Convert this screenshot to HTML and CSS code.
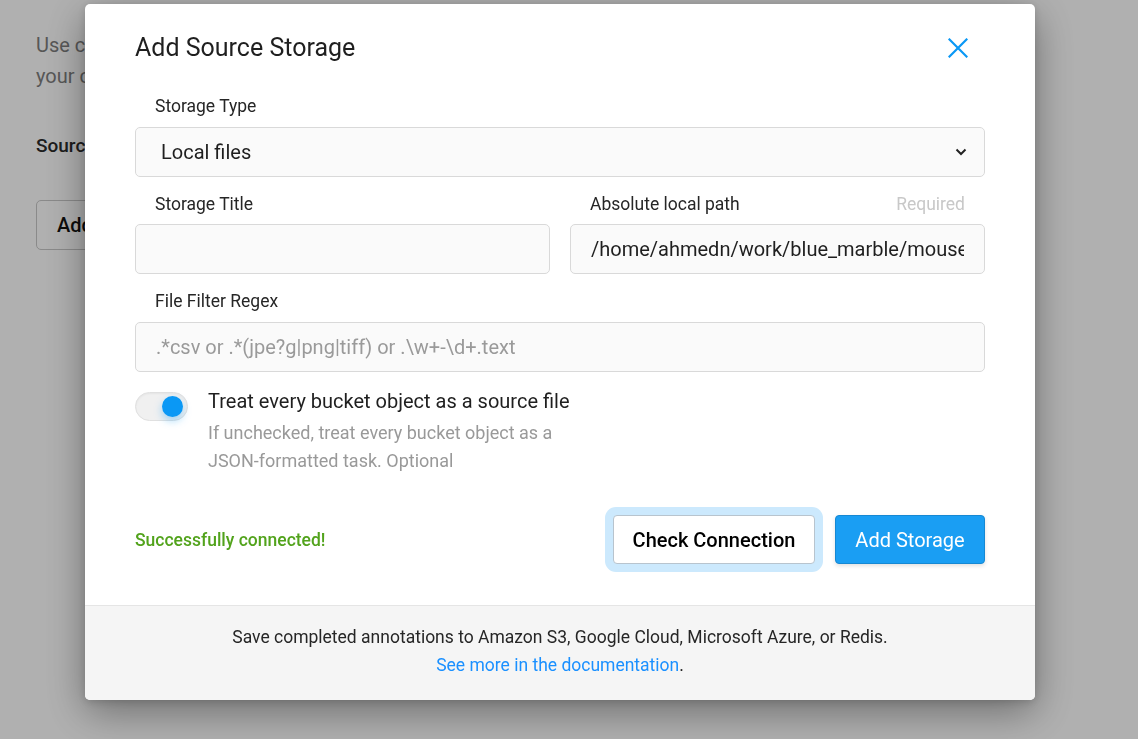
FILE: index.html
```html
<!DOCTYPE html>
<html lang="en">
<head>
<meta charset="utf-8">
<title>Add Source Storage</title>
<link rel="stylesheet" href="styles.css">
</head>
<body>
<div class="page">
  <p class="intro">Use cloud or database storage as the source for your labeling tasks or the target of<br>your completed annotations.</p>
  <h3 class="section-title">Source Cloud Storage</h3>
  <button class="page-btn">Add Source Storage</button>
</div>

<div class="overlay">
  <div class="modal">
    <div class="modal-body">
      <div class="modal-header">
        <h2 class="modal-title">Add Source Storage</h2>
        <button class="close-btn" aria-label="Close">
          <svg width="20" height="20" viewBox="0 0 20 20"><path d="M1.5 1.5 L18.5 18.5 M18.5 1.5 L1.5 18.5" stroke="#0a98f5" stroke-width="2.2" fill="none" stroke-linecap="square"/></svg>
        </button>
      </div>

      <div class="field">
        <div class="label-row"><span class="label">Storage Type</span></div>
        <div class="select-wrap">
          <div class="select">Local files</div>
          <svg class="chevron" width="12" height="8" viewBox="0 0 12 8"><path d="M1.5 1.5 L6 6 L10.5 1.5" stroke="#222" stroke-width="2" fill="none"/></svg>
        </div>
      </div>

      <div class="field-row">
        <div class="field">
          <div class="label-row"><span class="label">Storage Title</span></div>
          <div class="input"></div>
        </div>
        <div class="field">
          <div class="label-row"><span class="label">Absolute local path</span><span class="required">Required</span></div>
          <div class="input"><span class="input-text">/home/ahmedn/work/blue_marble/mouse_images</span></div>
        </div>
      </div>

      <div class="field">
        <div class="label-row"><span class="label">File Filter Regex</span></div>
        <div class="input placeholder"><span class="input-text">.*csv or .*(jpe?g|png|tiff) or .\w+-\d+.text</span></div>
      </div>

      <div class="toggle-row">
        <div class="toggle"><span class="thumb"></span></div>
        <div class="toggle-text">
          <div class="toggle-title">Treat every bucket object as a source file</div>
          <div class="toggle-desc">If unchecked, treat every bucket object as a JSON-formatted task. Optional</div>
        </div>
      </div>

      <div class="actions">
        <span class="success">Successfully connected!</span>
        <div class="buttons">
          <button class="btn btn-default">Check Connection</button>
          <button class="btn btn-primary">Add Storage</button>
        </div>
      </div>
    </div>
    <div class="modal-footer">
      Save completed annotations to Amazon S3, Google Cloud, Microsoft Azure, or Redis.<br>
      <a class="doc-link" href="#">See more in the documentation</a>.
    </div>
  </div>
</div>
</body>
</html>
```

FILE: styles.css
```css
* { box-sizing: border-box; }
html, body { margin: 0; padding: 0; }
body {
  font-family: Roboto, "Noto Sans", "Liberation Sans", sans-serif;
  background: #ffffff;
  color: #222;
  width: 1138px;
  height: 739px;
  overflow: hidden;
}

.page { padding: 30px 36px; }
.intro {
  margin: 0;
  font-size: 20px;
  line-height: 31px;
  color: #7e7e7e;
  white-space: nowrap;
}
.section-title {
  margin: 42px 0 0;
  font-size: 19px;
  font-weight: 500;
  line-height: 24px;
  color: #2a2a2a;
}
.page-btn {
  margin-top: 42px;
  height: 50px;
  padding: 0 20px;
  font-family: inherit;
  font-size: 20px;
  font-weight: 500;
  color: #111;
  background: #fff;
  border: 1px solid #c8c8c8;
  border-radius: 5px;
}

.overlay {
  position: fixed;
  inset: 0;
  background: rgba(0, 0, 0, 0.31);
}
.modal {
  position: absolute;
  left: 85px;
  top: 4px;
  width: 950px;
  background: #fff;
  border-radius: 5px;
  overflow: hidden;
  box-shadow: 0 12px 40px rgba(0, 0, 0, 0.38), 0 2px 8px rgba(0, 0, 0, 0.15);
}
.modal-body { padding: 30px 50px 41px; }

.modal-header {
  display: flex;
  justify-content: space-between;
  align-items: center;
  margin-bottom: 33px;
}
.modal-title {
  margin: 0;
  font-size: 25px;
  font-weight: 400;
  line-height: 28px;
  color: #1f1f1f;
}
.close-btn {
  width: 20px;
  height: 20px;
  padding: 0;
  margin-right: 17px;
  border: 0;
  background: none;
  display: flex;
}

.field { display: flex; flex-direction: column; margin-bottom: 16px; min-width: 0; }
.field-row { display: grid; grid-template-columns: 1fr 1fr; gap: 20px; }
.field-row .label-row { margin-bottom: 9px; }
.label-row {
  display: flex;
  justify-content: space-between;
  padding: 0 20px;
  margin-bottom: 10px;
  line-height: 22px;
}
.label { font-size: 17.5px; color: #262626; }
.required { font-size: 17.5px; color: #c8c8c8; }

.select-wrap { position: relative; }
.select, .input {
  height: 50px;
  border: 1px solid #d9d9d9;
  border-radius: 5px;
  background: #fafafa;
  display: flex;
  align-items: center;
  font-size: 20px;
  color: #1f1f1f;
  overflow: hidden;
  white-space: nowrap;
}
.select { padding-left: 25px; }
.input { padding: 0 20px; }
.input-text { flex: 1; min-width: 0; overflow: hidden; }
.input.placeholder { color: #9a9a9a; }
.chevron { position: absolute; right: 18px; top: 21px; }

.toggle-row {
  display: flex;
  gap: 20px;
  padding-top: 1px;
}
.toggle {
  position: relative;
  flex: none;
  width: 53px;
  height: 29px;
  margin-top: 3px;
  border-radius: 15px;
  background: #f0f0f0;
  border: 1px solid #e0e0e0;
  box-shadow: inset 0 1px 2px rgba(0,0,0,0.05);
}
.thumb {
  position: absolute;
  right: 4px;
  top: 3px;
  width: 21px;
  height: 21px;
  border-radius: 50%;
  background: #0a98f5;
  box-shadow: 0 4px 8px rgba(10, 152, 245, 0.35);
}
.toggle-title {
  font-size: 20px;
  line-height: 24px;
  color: #1f1f1f;
}
.toggle-desc {
  margin-top: 6px;
  max-width: 360px;
  font-size: 18px;
  line-height: 28px;
  color: #999;
}

.actions {
  display: flex;
  justify-content: space-between;
  align-items: center;
  margin-top: 40px;
}
.success {
  font-size: 17.5px;
  font-weight: 500;
  color: #52a31c;
}
.buttons { display: flex; align-items: center; gap: 20px; }
.btn {
  height: 49px;
  font-family: inherit;
  font-size: 20px;
  border-radius: 4px;
  cursor: pointer;
}
.btn-default {
  width: 202px;
  background: #fff;
  border: 1px solid #b8c4ce;
  color: #000;
  font-weight: 500;
  box-shadow: 0 0 0 8px #cce9fd;
}
.btn-primary {
  width: 150px;
  background: #1a9ef3;
  border: 1px solid #1688d3;
  color: #fff;
  box-shadow: 0 2px 4px rgba(0,0,0,0.12);
}

.modal-footer {
  background: #f5f5f5;
  border-top: 1px solid #e5e5e5;
  padding: 17px 20px 21px;
  text-align: center;
  font-size: 17.5px;
  line-height: 28px;
  color: #262626;
}
.doc-link { color: #1a90ff; text-decoration: none; }
```
